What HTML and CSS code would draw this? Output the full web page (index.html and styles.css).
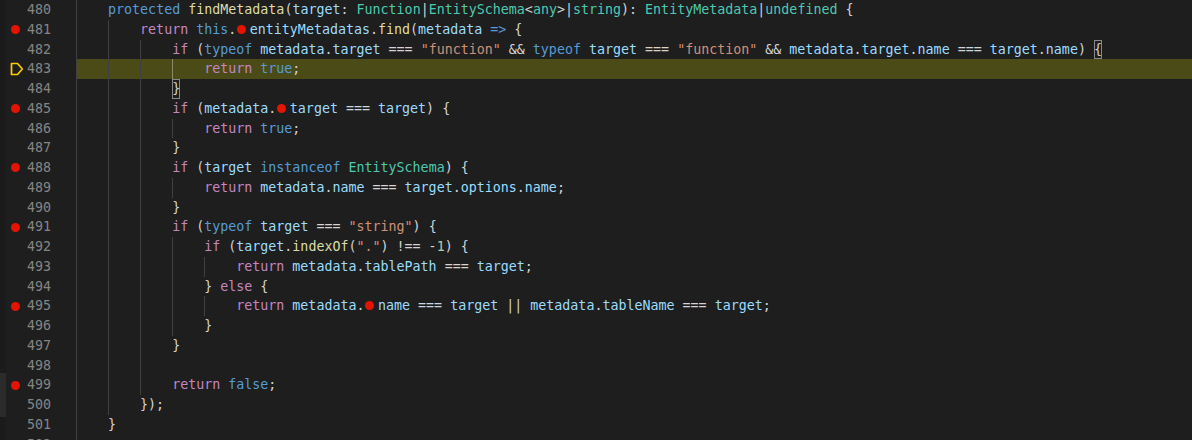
FILE: index.html
```html
<!DOCTYPE html>
<html>
<head>
<meta charset="utf-8">
<link rel="stylesheet" href="styles.css">
</head>
<body>
<div class="editor">
  <div class="strip">
    <div class="strip-top"></div>
    <div class="strip-thumb"></div>
    <div class="strip-rest"></div>
  </div>
  <div class="lines">
    <div class="row"><div class="gut"><span class="glyph"></span><span class="num">480</span></div><div class="code"><span class="i"></span><span class="k">protected</span> <span class="f">findMetadata</span>(<span class="v">target</span>: <span class="t">Function</span>|<span class="t">EntitySchema</span>&lt;<span class="t">any</span>&gt;|<span class="t">string</span>): <span class="t">EntityMetadata</span>|<span class="t">undefined</span> {</div></div>
    <div class="row"><div class="gut"><span class="glyph"><span class="dot"></span></span><span class="num">481</span></div><div class="code"><span class="i"></span><span class="i"></span><span class="c">return</span> <span class="k">this</span>.<span class="bp"></span><span class="v">entityMetadatas</span>.<span class="f">find</span>(<span class="v">metadata</span> <span class="k">=&gt;</span> {</div></div>
    <div class="row"><div class="gut"><span class="glyph"></span><span class="num">482</span></div><div class="code"><span class="i"></span><span class="i"></span><span class="i"></span><span class="c">if</span> (<span class="k">typeof</span> <span class="v">metadata</span>.<span class="v">target</span> === <span class="s">"function"</span> &amp;&amp; <span class="k">typeof</span> <span class="v">target</span> === <span class="s">"function"</span> &amp;&amp; <span class="v">metadata</span>.<span class="v">target</span>.<span class="v">name</span> === <span class="v">target</span>.<span class="v">name</span>) <span class="bm">{</span></div></div>
    <div class="row"><div class="gut"><span class="glyph"><svg class="frame" width="14" height="14" viewBox="0 0 14 14"><path d="M1.5 1.5 H7.5 L12.3 7 L7.5 12.5 H1.5 Z" fill="none" stroke="#ffcc00" stroke-width="1.7" stroke-linejoin="round"/></svg></span><span class="num">483</span></div><div class="code hl"><span class="i"></span><span class="i"></span><span class="i"></span><span class="i act"></span><span class="c">return</span> <span class="k">true</span>;</div></div>
    <div class="row"><div class="gut"><span class="glyph"></span><span class="num">484</span></div><div class="code"><span class="i"></span><span class="i"></span><span class="i"></span><span class="bm">}</span></div></div>
    <div class="row"><div class="gut"><span class="glyph"><span class="dot"></span></span><span class="num">485</span></div><div class="code"><span class="i"></span><span class="i"></span><span class="i"></span><span class="c">if</span> (<span class="v">metadata</span>.<span class="bp"></span><span class="v">target</span> === <span class="v">target</span>) {</div></div>
    <div class="row"><div class="gut"><span class="glyph"></span><span class="num">486</span></div><div class="code"><span class="i"></span><span class="i"></span><span class="i"></span><span class="i"></span><span class="c">return</span> <span class="k">true</span>;</div></div>
    <div class="row"><div class="gut"><span class="glyph"></span><span class="num">487</span></div><div class="code"><span class="i"></span><span class="i"></span><span class="i"></span>}</div></div>
    <div class="row"><div class="gut"><span class="glyph"><span class="dot"></span></span><span class="num">488</span></div><div class="code"><span class="i"></span><span class="i"></span><span class="i"></span><span class="c">if</span> (<span class="v">target</span> <span class="k">instanceof</span> <span class="t">EntitySchema</span>) {</div></div>
    <div class="row"><div class="gut"><span class="glyph"></span><span class="num">489</span></div><div class="code"><span class="i"></span><span class="i"></span><span class="i"></span><span class="i"></span><span class="c">return</span> <span class="v">metadata</span>.<span class="v">name</span> === <span class="v">target</span>.<span class="v">options</span>.<span class="v">name</span>;</div></div>
    <div class="row"><div class="gut"><span class="glyph"></span><span class="num">490</span></div><div class="code"><span class="i"></span><span class="i"></span><span class="i"></span>}</div></div>
    <div class="row"><div class="gut"><span class="glyph"><span class="dot"></span></span><span class="num">491</span></div><div class="code"><span class="i"></span><span class="i"></span><span class="i"></span><span class="c">if</span> (<span class="k">typeof</span> <span class="v">target</span> === <span class="s">"string"</span>) {</div></div>
    <div class="row"><div class="gut"><span class="glyph"></span><span class="num">492</span></div><div class="code"><span class="i"></span><span class="i"></span><span class="i"></span><span class="i"></span><span class="c">if</span> (<span class="v">target</span>.<span class="f">indexOf</span>(<span class="s">"."</span>) !== -<span class="n">1</span>) {</div></div>
    <div class="row"><div class="gut"><span class="glyph"></span><span class="num">493</span></div><div class="code"><span class="i"></span><span class="i"></span><span class="i"></span><span class="i"></span><span class="i"></span><span class="c">return</span> <span class="v">metadata</span>.<span class="v">tablePath</span> === <span class="v">target</span>;</div></div>
    <div class="row"><div class="gut"><span class="glyph"></span><span class="num">494</span></div><div class="code"><span class="i"></span><span class="i"></span><span class="i"></span><span class="i"></span>} <span class="c">else</span> {</div></div>
    <div class="row"><div class="gut"><span class="glyph"><span class="dot"></span></span><span class="num">495</span></div><div class="code"><span class="i"></span><span class="i"></span><span class="i"></span><span class="i"></span><span class="i"></span><span class="c">return</span> <span class="v">metadata</span>.<span class="bp"></span><span class="v">name</span> === <span class="v">target</span> || <span class="v">metadata</span>.<span class="v">tableName</span> === <span class="v">target</span>;</div></div>
    <div class="row"><div class="gut"><span class="glyph"></span><span class="num">496</span></div><div class="code"><span class="i"></span><span class="i"></span><span class="i"></span><span class="i"></span>}</div></div>
    <div class="row"><div class="gut"><span class="glyph"></span><span class="num">497</span></div><div class="code"><span class="i"></span><span class="i"></span><span class="i"></span>}</div></div>
    <div class="row"><div class="gut"><span class="glyph"></span><span class="num">498</span></div><div class="code"><span class="i"></span><span class="i"></span><span class="i"></span></div></div>
    <div class="row"><div class="gut"><span class="glyph"><span class="dot"></span></span><span class="num">499</span></div><div class="code"><span class="i"></span><span class="i"></span><span class="i"></span><span class="c">return</span> <span class="k">false</span>;</div></div>
    <div class="row"><div class="gut"><span class="glyph"></span><span class="num">500</span></div><div class="code"><span class="i"></span><span class="i"></span>});</div></div>
    <div class="row"><div class="gut"><span class="glyph"></span><span class="num">501</span></div><div class="code"><span class="i"></span>}</div></div>
    <div class="row"><div class="gut"><span class="glyph"></span><span class="num">502</span></div><div class="code"></div></div>
  </div>
</div>
</body>
</html>
```

FILE: styles.css
```css
html, body {
  margin: 0;
  padding: 0;
  background: #1e1e1e;
  overflow: hidden;
}

.editor {
  display: flex;
  width: 1192px;
  height: 440px;
  overflow: hidden;
  font-family: "DejaVu Sans Mono", "Liberation Mono", monospace;
  font-size: 13.32px;
  color: #d4d4d4;
}

.strip {
  width: 6px;
  flex: none;
  display: flex;
  flex-direction: column;
}

.strip-top {
  height: 373px;
  background: #1b1b1b;
}

.strip-thumb {
  height: 44px;
  background: #2b2b2c;
}

.strip-rest {
  flex: 1;
  background: #1b1b1b;
}

.lines {
  flex: 1;
  display: flex;
  flex-direction: column;
}

.row {
  display: flex;
  height: 19.75px;
  flex: none;
}

.gut {
  width: 70px;
  flex: none;
  display: flex;
  align-items: center;
}

.glyph {
  width: 20px;
  height: 19.75px;
  flex: none;
  display: flex;
  align-items: center;
}

.dot {
  width: 9px;
  height: 9px;
  margin-left: 5px;
  border-radius: 50%;
  background: #e51400;
}

.frame {
  margin-left: 3.5px;
  display: block;
}

.num {
  width: 25px;
  text-align: right;
  color: #858585;
  line-height: 19.75px;
}

.code {
  flex: 1;
  white-space: pre;
  line-height: 19.75px;
  height: 19.75px;
  box-shadow: inset 1px 0 0 #404040;
}

.code.hl {
  background: #4b4b18;
  box-shadow: none;
}

.i {
  display: inline-block;
  width: 4ch;
  height: 19.75px;
  vertical-align: top;
  box-shadow: inset 1px 0 0 #404040;
}

.i.act {
  box-shadow: inset 1px 0 0 #8a8a6a;
}

.bp {
  display: inline-block;
  width: 13.5px;
  height: 19.75px;
  vertical-align: top;
  position: relative;
}

.bp::before {
  content: "";
  position: absolute;
  left: 1px;
  top: 5.2px;
  width: 9px;
  height: 9px;
  border-radius: 50%;
  background: #e51400;
}

.bm {
  display: inline-block;
  height: 19.75px;
  vertical-align: top;
  box-shadow: inset 0 0 0 1px #888888;
}

.k { color: #569cd6; }
.c { color: #c586c0; }
.f { color: #dcdcaa; }
.v { color: #9cdcfe; }
.t { color: #4ec9b0; }
.s { color: #ce9178; }
.n { color: #b5cea8; }
```
